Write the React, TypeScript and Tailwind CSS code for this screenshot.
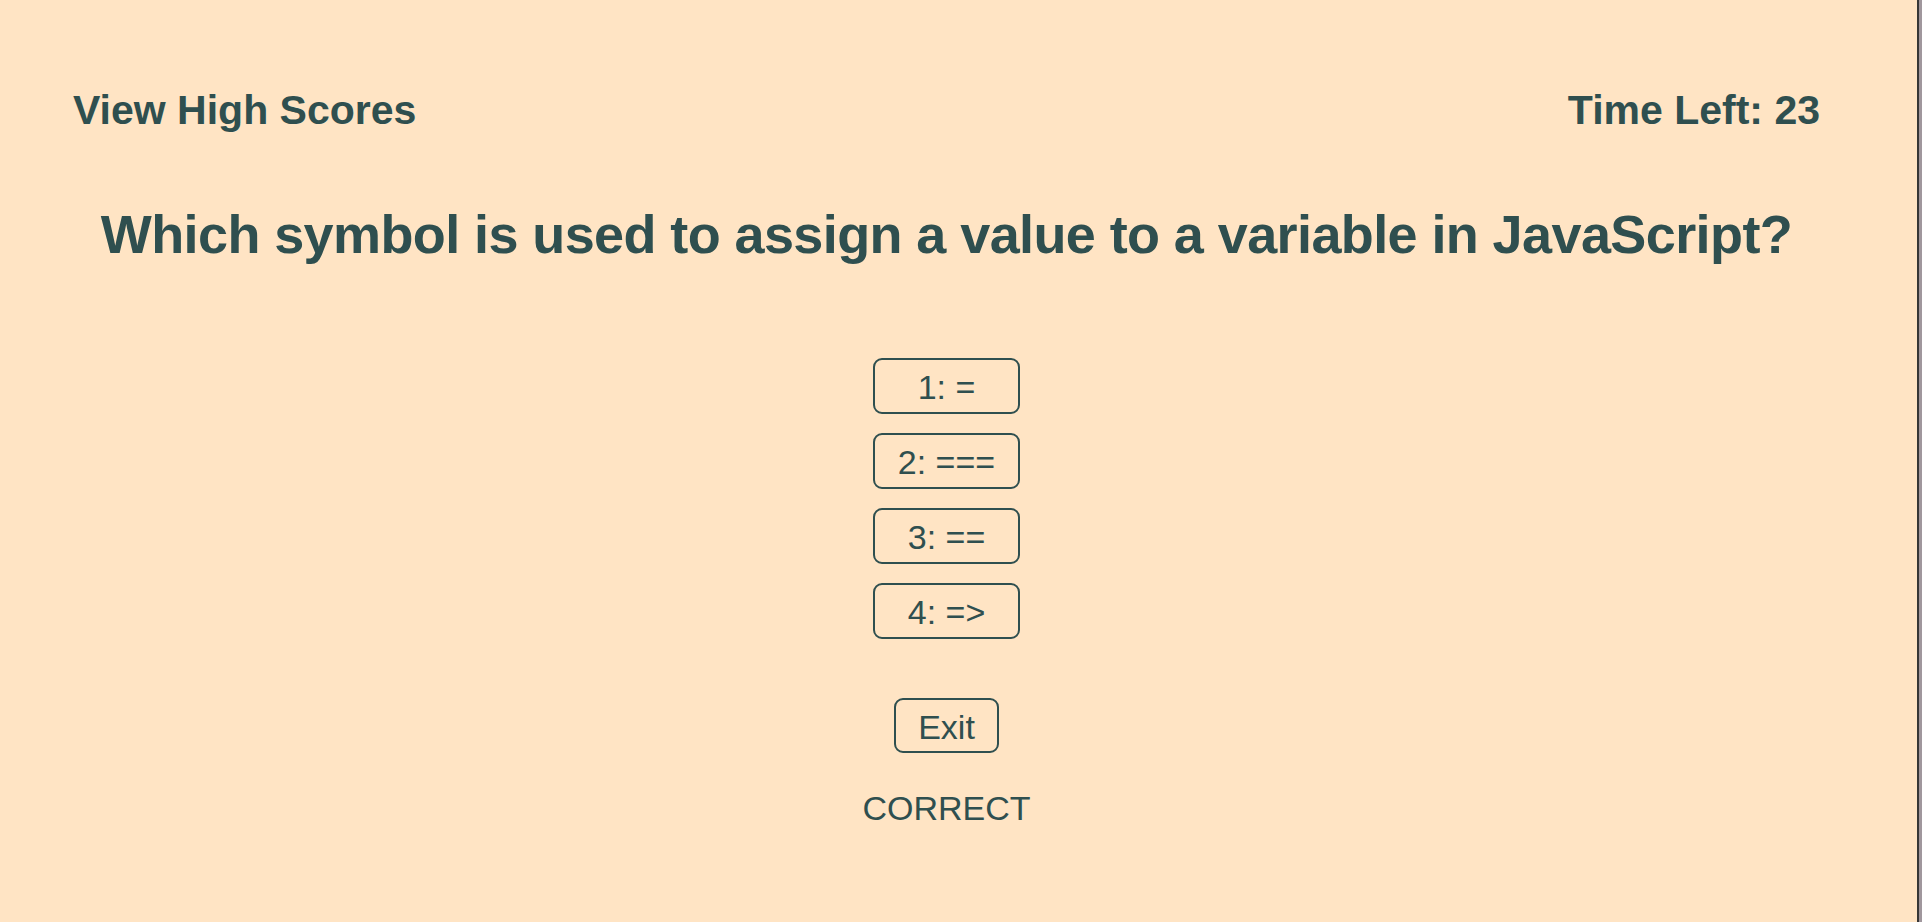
import React from "react";

const answers = ["1: =", "2: ===", "3: ==", "4: =>"];

export default function App() {
  return (
    <div
      className="flex h-[922px] w-full overflow-hidden bg-[#FFE4C4] text-[#2F4F4F]"
      style={{ fontFamily: '"Liberation Sans", Arial, Helvetica, sans-serif' }}
    >
      <div className="flex-1">
        <div className="ml-[73px] w-[1747px] pt-[90px]">
          <header className="flex items-start justify-between">
            <a className="cursor-pointer text-[41px] font-bold leading-[41px]">View High Scores</a>
            <div className="text-[41px] font-bold leading-[41px]">Time Left: 23</div>
          </header>
          <h1 className="mt-[76px] whitespace-nowrap text-center text-[54px] font-bold leading-[54px] tracking-[-0.6px]">
            Which symbol is used to assign a value to a variable in JavaScript?
          </h1>
          <div className="mt-[97px] flex flex-col items-center gap-[19px]">
            {answers.map((a) => (
              <button
                key={a}
                className="flex h-[56px] w-[147px] items-center justify-center rounded-[9px] border-2 border-[#2F4F4F] pt-[2px] text-[34px] leading-[34px]"
              >
                {a}
              </button>
            ))}
          </div>
          <div className="mt-[59px] flex justify-center">
            <button className="flex h-[55px] items-center justify-center rounded-[9px] border-2 border-[#2F4F4F] px-[22px] pt-[2px] text-[34px] leading-[34px]">
              Exit
            </button>
          </div>
          <p className="mt-[38px] text-center text-[34px] leading-[34px]">CORRECT</p>
        </div>
      </div>
      <div className="w-[2px] bg-[#363636]" />
      <div className="w-[3px] bg-[#a0979d]" />
    </div>
  );
}
